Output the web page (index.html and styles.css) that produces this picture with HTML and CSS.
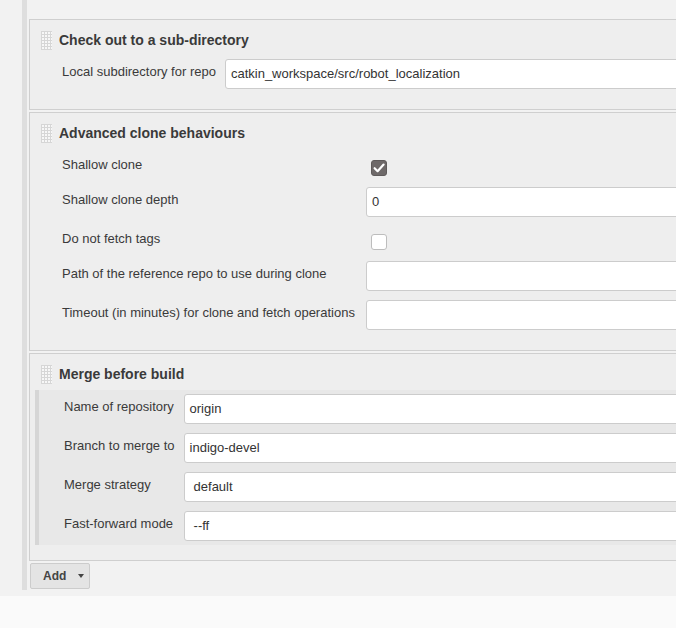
FILE: index.html
```html
<!DOCTYPE html>
<html lang="en">
<head>
<meta charset="utf-8">
<title>Git additional behaviours</title>
<link rel="stylesheet" href="styles.css">
</head>
<body>
<div class="page">
  <div class="rail">
    <section class="panel">
      <div class="panel-head"><span class="grip"></span><h3 class="title">Check out to a sub-directory</h3></div>
      <div class="form form-wide">
        <div class="lbl">Local subdirectory for repo</div>
        <div class="input">catkin_workspace/src/robot_localization</div>
      </div>
    </section>

    <section class="panel">
      <div class="panel-head"><span class="grip"></span><h3 class="title">Advanced clone behaviours</h3></div>
      <div class="form form-wide form-clone">
        <div class="lbl lbl-short">Shallow clone</div>
        <div class="check-cell"><span class="checkbox checked"><svg viewBox="0 0 16 16" width="16" height="16"><path d="M3.6 8.2 L6.6 11.2 L12.6 4.6" fill="none" stroke="#fff" stroke-width="2.2" stroke-linecap="round" stroke-linejoin="round"/></svg></span></div>

        <div class="lbl">Shallow clone depth</div>
        <div class="input">0</div>

        <div class="lbl lbl-short">Do not fetch tags</div>
        <div class="check-cell"><span class="checkbox"></span></div>

        <div class="lbl">Path of the reference repo to use during clone</div>
        <div class="input"></div>

        <div class="lbl">Timeout (in minutes) for clone and fetch operations</div>
        <div class="input"></div>
      </div>
    </section>

    <section class="panel panel-last">
      <div class="panel-head"><span class="grip"></span><h3 class="title">Merge before build</h3></div>
      <div class="nested">
        <div class="form form-nested">
          <div class="lbl">Name of repository</div>
          <div class="input">origin</div>

          <div class="lbl">Branch to merge to</div>
          <div class="input">indigo-devel</div>

          <div class="lbl">Merge strategy</div>
          <div class="input select">default</div>

          <div class="lbl">Fast-forward mode</div>
          <div class="input select">--ff</div>
        </div>
      </div>
    </section>

    <button class="add" type="button">Add <span class="caret"></span></button>
  </div>
</div>
</body>
</html>
```

FILE: styles.css
```css
html {
  overflow: hidden;
}

body {
  margin: 0;
  background: #fafafa;
  font-family: "Liberation Sans", Arial, sans-serif;
  color: #333;
}

.page {
  background: #f2f2f2;
  width: 780px;
  padding-bottom: 6px;
}

.rail {
  margin-left: 22px;
  border-left: 5px solid #dedede;
  padding-left: 2px;
  padding-top: 19px;
  padding-bottom: 1px;
}

.panel {
  background: #eeeeee;
  border: 1px solid #cfcfcf;
  padding: 11px 0 20px 0;
  margin-bottom: 2px;
}

.panel-last {
  padding-bottom: 15px;
  margin-bottom: 2px;
}

.panel-head {
  display: flex;
  align-items: center;
  height: 19px;
  padding-left: 11px;
}

.grip {
  width: 11px;
  height: 19px;
  margin-right: 7px;
  background-color: #f7f7f7;
  background-image:
    repeating-linear-gradient(90deg, #d6d6d6 0 1px, transparent 1px 3px),
    repeating-linear-gradient(0deg, #d6d6d6 0 1px, transparent 1px 3px);
}

.title {
  margin: 0;
  font-size: 14px;
  font-weight: bold;
  color: #3a3a3a;
  line-height: 19px;
}

.form {
  display: grid;
  grid-template-columns: max-content 1fr;
  column-gap: 9px;
  row-gap: 9px;
  margin-top: 9px;
}

.form-wide {
  padding-left: 32px;
}

.form-clone {
  column-gap: 11px;
}

.lbl {
  font-size: 13px;
  line-height: 16px;
  padding-top: 5px;
  color: #3a3a3a;
}

.lbl-short {
  padding-top: 5px;
}

.input {
  height: 28px;
  border: 1px solid #cccccc;
  border-radius: 3px;
  background: #ffffff;
  font-size: 13px;
  line-height: 28px;
  padding-left: 5px;
  color: #333;
  box-sizing: content-box;
}

.select {
  padding-left: 9px;
}

.check-cell {
  height: 26px;
  padding-left: 5px;
}

.checkbox {
  display: block;
  width: 14px;
  height: 14px;
  margin-top: 8px;
  border: 1px solid #bdbdbd;
  border-radius: 3px;
  background: #ffffff;
}

.checkbox.checked {
  background: #6e6969;
  border-color: #5e5a5a;
}

.checkbox svg {
  display: block;
  margin: -1px 0 0 -1px;
}

.nested {
  margin: 6px 0 0 5px;
  border-left: 4px solid #d6d6d6;
  background: #e8e8e8;
  padding: 4px 0 4px 0;
}

.form-nested {
  margin-top: 0;
  padding-left: 25px;
  column-gap: 9px;
}

.add {
  display: flex;
  align-items: center;
  margin: 2px 0 0 1px;
  width: 60px;
  height: 26px;
  padding: 0 0 0 12px;
  border: 1px solid #cccccc;
  border-radius: 2px;
  background: #e4e4e4;
  font-family: "Liberation Sans", Arial, sans-serif;
  font-size: 12px;
  font-weight: bold;
  color: #444;
}

.caret {
  width: 0;
  height: 0;
  margin-left: 12px;
  border-left: 3px solid transparent;
  border-right: 3px solid transparent;
  border-top: 4px solid #444;
}
```
